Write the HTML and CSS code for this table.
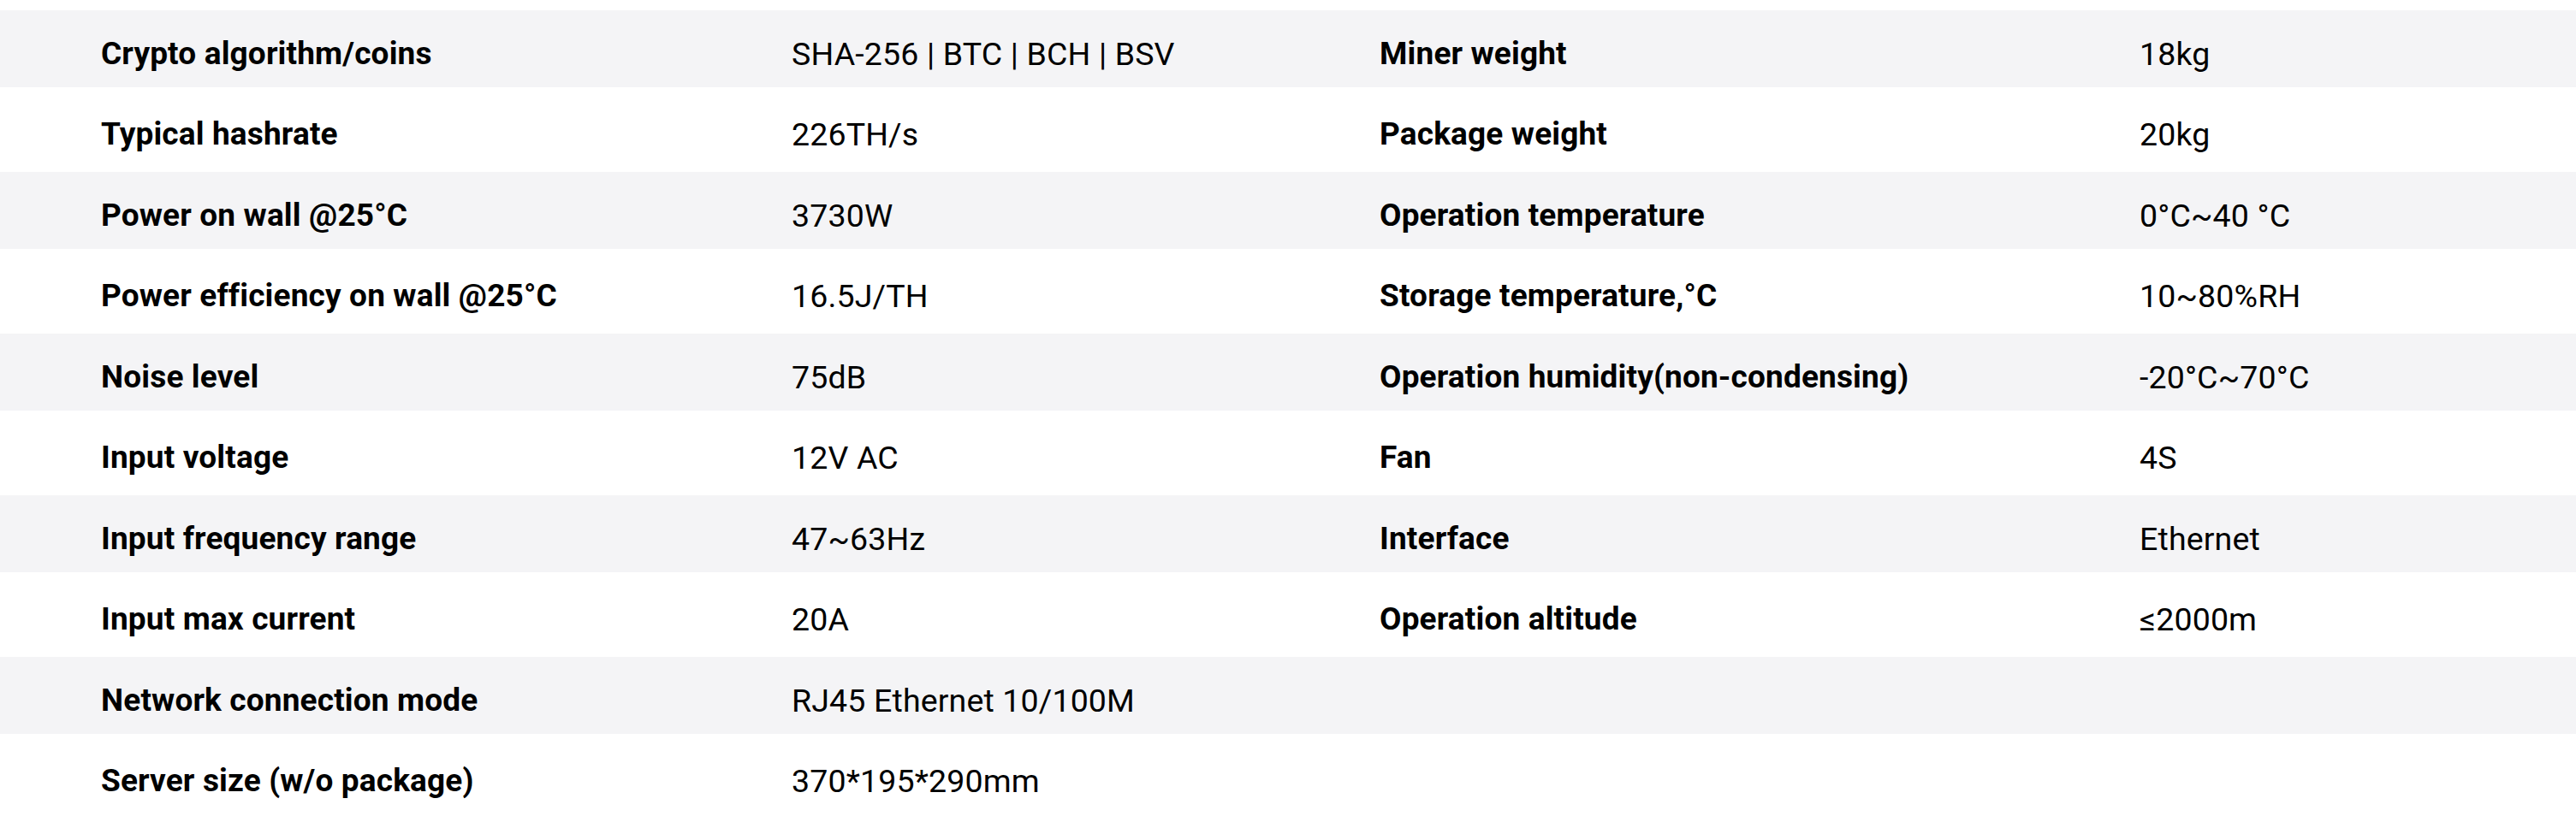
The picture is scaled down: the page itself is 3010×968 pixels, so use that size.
FILE: index.html
```html
<!DOCTYPE html>
<html lang="en">
<head>
<meta charset="utf-8">
<title>Specifications</title>
<link rel="stylesheet" href="styles.css">
</head>
<body>
<div class="specs">
  <div class="row odd">
    <div class="label">Crypto algorithm/coins</div><div class="value">SHA-256 | BTC | BCH | BSV</div>
    <div class="label">Miner weight</div><div class="value">18kg</div>
  </div>
  <div class="row even">
    <div class="label">Typical hashrate</div><div class="value">226TH/s</div>
    <div class="label">Package weight</div><div class="value">20kg</div>
  </div>
  <div class="row odd">
    <div class="label">Power on wall @25°C</div><div class="value">3730W</div>
    <div class="label">Operation temperature</div><div class="value">0°C~40 °C</div>
  </div>
  <div class="row even">
    <div class="label">Power efficiency on wall @25°C</div><div class="value">16.5J/TH</div>
    <div class="label">Storage temperature,°C</div><div class="value">10~80%RH</div>
  </div>
  <div class="row odd">
    <div class="label">Noise level</div><div class="value">75dB</div>
    <div class="label">Operation humidity(non-condensing)</div><div class="value">-20°C~70°C</div>
  </div>
  <div class="row even">
    <div class="label">Input voltage</div><div class="value">12V AC</div>
    <div class="label">Fan</div><div class="value">4S</div>
  </div>
  <div class="row odd">
    <div class="label">Input frequency range</div><div class="value">47~63Hz</div>
    <div class="label">Interface</div><div class="value">Ethernet</div>
  </div>
  <div class="row even">
    <div class="label">Input max current</div><div class="value">20A</div>
    <div class="label">Operation altitude</div><div class="value">≤2000m</div>
  </div>
  <div class="row odd">
    <div class="label">Network connection mode</div><div class="value">RJ45 Ethernet 10/100M</div>
    <div class="label"></div><div class="value"></div>
  </div>
  <div class="row even">
    <div class="label">Server size (w/o package)</div><div class="value">370*195*290mm</div>
    <div class="label"></div><div class="value"></div>
  </div>
</div>
</body>
</html>
```

FILE: styles.css
```css
html, body {
  margin: 0;
  padding: 0;
  background: #ffffff;
}

body {
  font-family: Roboto, "Noto Sans", "Liberation Sans", sans-serif;
  color: #000000;
}

.specs {
  padding-top: 12px;
  display: flex;
  flex-direction: column;
}

.row {
  display: grid;
  grid-template-columns: 807px 687px 888px 1fr;
  align-items: center;
  padding-left: 118px;
  box-sizing: border-box;
  padding-top: 11px;
  font-size: 37px;
  line-height: 42px;
}

.row.odd {
  height: 90px;
  background: #f4f4f6;
}

.row.even {
  height: 99px;
  background: #ffffff;
}

.label {
  font-weight: 700;
  letter-spacing: 0.15px;
  white-space: nowrap;
}

.value {
  font-weight: 400;
  font-size: 37.5px;
  letter-spacing: 0.15px;
  white-space: nowrap;
}
```
